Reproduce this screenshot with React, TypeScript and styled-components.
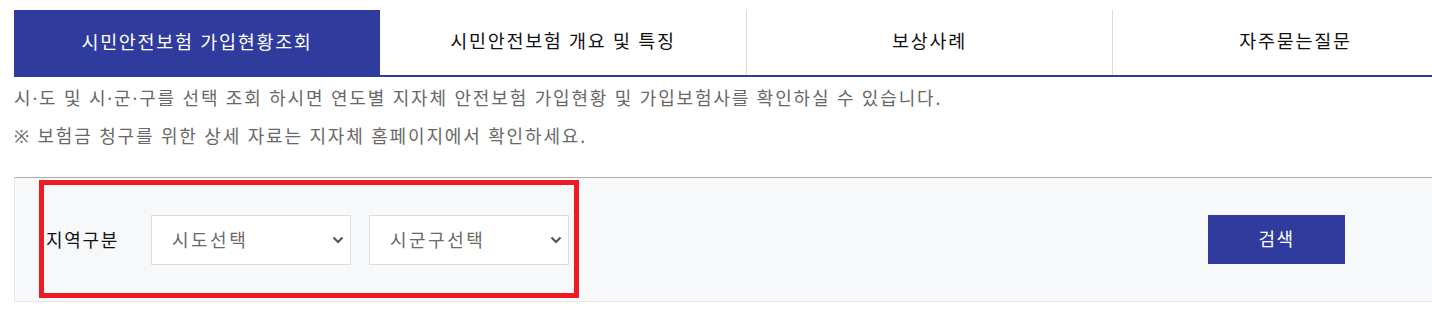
import React from "react";
import styled, { createGlobalStyle } from "styled-components";

const GlobalStyle = createGlobalStyle`
  html, body {
    margin: 0;
    padding: 0;
    background: #ffffff;
    overflow: hidden;
  }
  body {
    font-family: "Noto Sans", "Noto Sans CJK KR", sans-serif;
  }
  * { box-sizing: border-box; }
`;

const Page = styled.div`
  width: 1464px;
  padding-top: 10px;
  margin-left: 14px;
`;

const TabBar = styled.ul`
  list-style: none;
  margin: 0;
  padding: 0;
  display: grid;
  grid-template-columns: repeat(4, 1fr);
  height: 67px;
  border-top: 1px solid #dddddd;
  border-bottom: 2px solid #2f3c9d;
`;

const Tab = styled.li<{ $active?: boolean }>`
  display: flex;
  align-items: center;
  justify-content: center;
  margin-top: -1px;
  margin-bottom: ${(p) => (p.$active ? "-2px" : "0")};
  background: ${(p) => (p.$active ? "#2f3c9d" : "#ffffff")};
  color: ${(p) => (p.$active ? "#ffffff" : "#111111")};
  font-size: 18.5px;
  letter-spacing: 1.7px;
  padding-bottom: 6px;
  border-left: ${(p) => (p.$active ? "none" : "1px solid #dddddd")};
  &:nth-child(2) {
    border-left: none;
  }
`;

const Notice = styled.p`
  margin: 2px 0 0 0;
  line-height: 38px;
  font-size: 18px;
  color: #686868;
  letter-spacing: 1.85px;
`;

const Panel = styled.div`
  position: relative;
  margin-top: 22px;
  height: 125px;
  display: flex;
  align-items: center;
  padding: 0 133px 0 31px;
  background: #f7f8fa;
  border-top: 1px solid #aaaaaa;
  border-left: 1px solid #e6e8eb;
  border-bottom: 1px solid #e6e8eb;
`;

const Label = styled.span`
  font-size: 18px;
  letter-spacing: 1.7px;
  color: #111111;
  width: 105px;
  margin-top: -2px;
`;

const SelectBox = styled.div`
  position: relative;
  width: 200px;
  height: 50px;
  margin-right: 18px;
  background: #ffffff;
  border: 1px solid #dcdcdc;
  display: flex;
  align-items: center;
  padding: 0 20px 2px 20px;
  font-size: 18px;
  letter-spacing: 2.5px;
  color: #6a6a6a;
`;

const Chevron = styled.svg`
  position: absolute;
  right: 6px;
  top: 50%;
  margin-top: -4px;
  width: 12px;
  height: 8px;
`;

const SearchButton = styled.button`
  margin-left: auto;
  width: 137px;
  height: 49px;
  border: none;
  background: #2f3c9d;
  color: #ffffff;
  font-family: inherit;
  font-size: 18px;
  letter-spacing: 1.5px;
  cursor: pointer;
  padding: 0 0 4px 0;
`;

const Highlight = styled.div`
  position: absolute;
  left: 24px;
  top: 2px;
  width: 540px;
  height: 118px;
  border: 5px solid #ed1c24;
  pointer-events: none;
`;

const tabs = [
  "시민안전보험 가입현황조회",
  "시민안전보험 개요 및 특징",
  "보상사례",
  "자주묻는질문",
];

function Select({ label }: { label: string }) {
  return (
    <SelectBox>
      {label}
      <Chevron viewBox="0 0 12 8">
        <path d="M1.5 1.5 L6 6 L10.5 1.5" fill="none" stroke="#555555" strokeWidth="2.2" />
      </Chevron>
    </SelectBox>
  );
}

export default function App() {
  return (
    <>
      <GlobalStyle />
      <Page>
        <TabBar>
          {tabs.map((t, i) => (
            <Tab key={t} $active={i === 0}>
              {t}
            </Tab>
          ))}
        </TabBar>
        <Notice>
          시·도 및 시·군·구를 선택 조회 하시면 연도별 지자체 안전보험 가입현황 및 가입보험사를 확인하실 수 있습니다.
          <br />※ 보험금 청구를 위한 상세 자료는 지자체 홈페이지에서 확인하세요.
        </Notice>
        <Panel>
          <Label>지역구분</Label>
          <Select label="시도선택" />
          <Select label="시군구선택" />
          <SearchButton>검색</SearchButton>
          <Highlight />
        </Panel>
      </Page>
    </>
  );
}
